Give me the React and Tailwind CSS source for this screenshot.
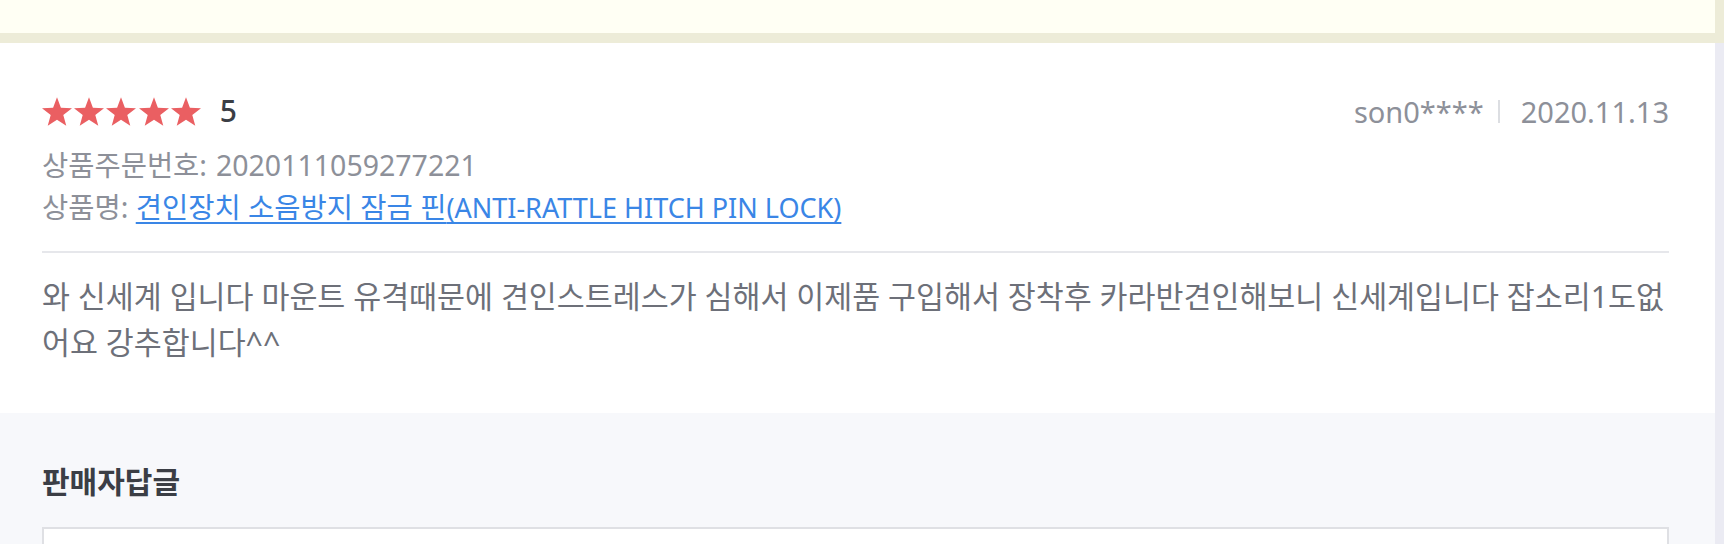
import React from "react";

const Star = () => (
  <svg width="30" height="29" viewBox="0 0 19.02 18.09" className="block">
    <polygon
      points="9.51,0 11.98,6.6 19.02,6.91 13.5,11.3 15.39,18.09 9.51,14.2 3.63,18.09 5.52,11.3 0,6.91 7.04,6.6"
      fill="#ea5f62"
    />
  </svg>
);

export default function App() {
  return (
    <div
      className="w-[1730px] h-[544px] overflow-hidden bg-white"
      style={{ fontFamily: "'Noto Sans', 'Noto Sans CJK KR', sans-serif" }}
    >
      <div className="w-[1724px] h-[43px] bg-[#fffff4] border-r-[9px] border-b-[10px] border-[#edecd8]" />
      <div className="w-[1724px] border-r-[9px] border-[#ebebf3]">
        <div className="bg-white pl-[42px] pr-[46px] pt-[50px] pb-[47px]">
          <div className="flex items-center justify-between h-[36px]">
            <div className="flex items-center">
              <div className="flex gap-[2.2px]">
                <Star />
                <Star />
                <Star />
                <Star />
                <Star />
              </div>
              <span className="ml-[19px] text-[30px] font-medium text-[#3b3e45] leading-none">5</span>
            </div>
            <div className="flex items-center text-[29px] text-[#8d9099] leading-none">
              <span>son0****</span>
              <span className="mx-[14px] w-[2px] h-[23px] bg-[#dcdee2]" />
              <span className="ml-[7px]">2020.11.13</span>
            </div>
          </div>
          <div className="mt-[17px] text-[#8d9099] text-[28.5px]">
            <div className="h-[40px] leading-[38px] whitespace-nowrap">
              상품주문번호:<span className="ml-[9px]">2020111059277221</span>
            </div>
            <div className="h-[40px] leading-[42px] whitespace-nowrap">
              상품명:{" "}
              <a className="text-[#3a86e6] underline underline-offset-[4px] decoration-[1.5px] decoration-[#3a86e6]">
                견인장치 소음방지 잠금 핀<span className="text-[27px]">(ANTI-RATTLE HITCH PIN LOCK)</span>
              </a>
            </div>
          </div>
          <div className="mt-[25px] border-t-2 border-[#e6e7eb]" />
          <p className="mt-[21px] whitespace-nowrap text-[30.4px] leading-[46px] text-[#6d7079]">
            와 신세계 입니다 마운트 유격때문에 견인스트레스가 심해서 이제품 구입해서 장착후 카라반견인해보니 신세계입니다 잡소리1도없
            <br />
            어요 강추합니다^^
          </p>
        </div>
        <div className="bg-[#f7f8fb] pl-[42px] pr-[46px] pt-[49px] pb-[40px]">
          <h3 className="text-[30px] font-bold leading-[40px] text-[#3b3e45]">판매자답글</h3>
          <div className="mt-[25px] h-[100px] bg-white border-2 border-[#dfe0e4]" />
        </div>
      </div>
    </div>
  );
}
